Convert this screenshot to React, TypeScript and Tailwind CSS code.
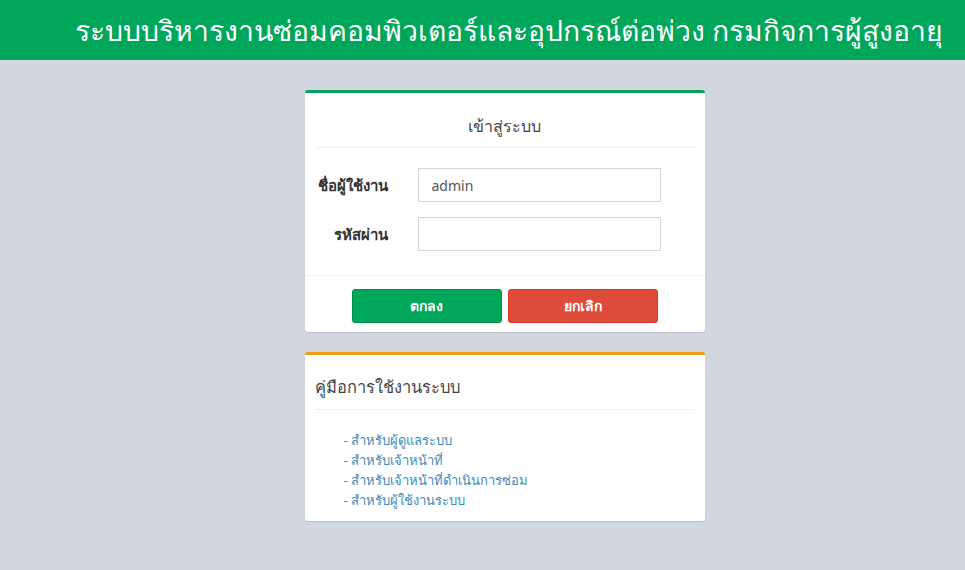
export default function App() {
  const manuals = [
    'สำหรับผู้ดูแลระบบ',
    'สำหรับเจ้าหน้าที่',
    'สำหรับเจ้าหน้าที่ดำเนินการซ่อม',
    'สำหรับผู้ใช้งานระบบ',
  ];

  return (
    <div
      className="min-h-[570px] bg-[#d2d6de] text-[#333]"
      style={{ fontFamily: '"Noto Sans", "Liberation Sans", sans-serif' }}
    >
      <header className="h-[60px] bg-[#00a65a] flex items-center pl-[75px] overflow-hidden">
        <h1 className="text-white text-[28.3px] leading-none whitespace-nowrap">
          ระบบบริหารงานซ่อมคอมพิวเตอร์และอุปกรณ์ต่อพ่วง กรมกิจการผู้สูงอายุ
        </h1>
      </header>

      <main className="flex flex-col items-center pt-[30px] pl-[44px] gap-5">
        <section className="w-[400px] bg-white border-t-[3px] border-[#00a65a] rounded-[3px] shadow-[0_1px_1px_rgba(0,0,0,0.1)]">
          <div className="mx-[10px] border-b border-[#f0f0f0] h-[55px] pt-3 flex items-center justify-center">
            <h3 className="text-[16px] text-[#444]">เข้าสู่ระบบ</h3>
          </div>
          <div className="px-[10px] pt-5 pb-[24px] flex flex-col gap-[15px]">
            <div className="flex items-center">
              <label className="w-[73px] text-right text-[15px] font-bold whitespace-nowrap">ชื่อผู้ใช้งาน</label>
              <input
                defaultValue="admin"
                className="ml-[30px] w-[243px] h-[34px] border border-[#d2d6de] px-[13px] text-[14px] text-[#555] outline-none"
              />
            </div>
            <div className="flex items-center">
              <label className="w-[73px] text-right text-[15px] font-bold whitespace-nowrap">รหัสผ่าน</label>
              <input
                type="password"
                className="ml-[30px] w-[243px] h-[34px] border border-[#d2d6de] px-3 text-[14px] outline-none"
              />
            </div>
          </div>
          <div className="border-t border-[#f4f4f4] h-[57px] pt-[3px] flex items-center justify-center gap-[6px]">
            <button className="w-[150px] h-[34px] bg-[#00a65a] border border-[#008d4c] rounded-[3px] text-white text-[14px] font-bold">
              ตกลง
            </button>
            <button className="w-[150px] h-[34px] bg-[#dd4b39] border border-[#d73925] rounded-[3px] text-white text-[14px] font-bold">
              ยกเลิก
            </button>
          </div>
        </section>

        <section className="w-[400px] bg-white border-t-[3px] border-[#f39c12] rounded-[3px] shadow-[0_1px_1px_rgba(0,0,0,0.1)]">
          <div className="mx-[10px] border-b border-[#f0f0f0] h-[55px] pt-[10px] flex items-center">
            <h3 className="text-[16.5px] text-[#444]">คู่มือการใช้งานระบบ</h3>
          </div>
          <ul className="pl-[39px] pt-[20px] pb-[11px] text-[13px] leading-[20px]">
            {manuals.map((m) => (
              <li key={m}>
                <a href="#" className="text-[#3c8dbc]">
                  - {m}
                </a>
              </li>
            ))}
          </ul>
        </section>
      </main>
    </div>
  );
}
